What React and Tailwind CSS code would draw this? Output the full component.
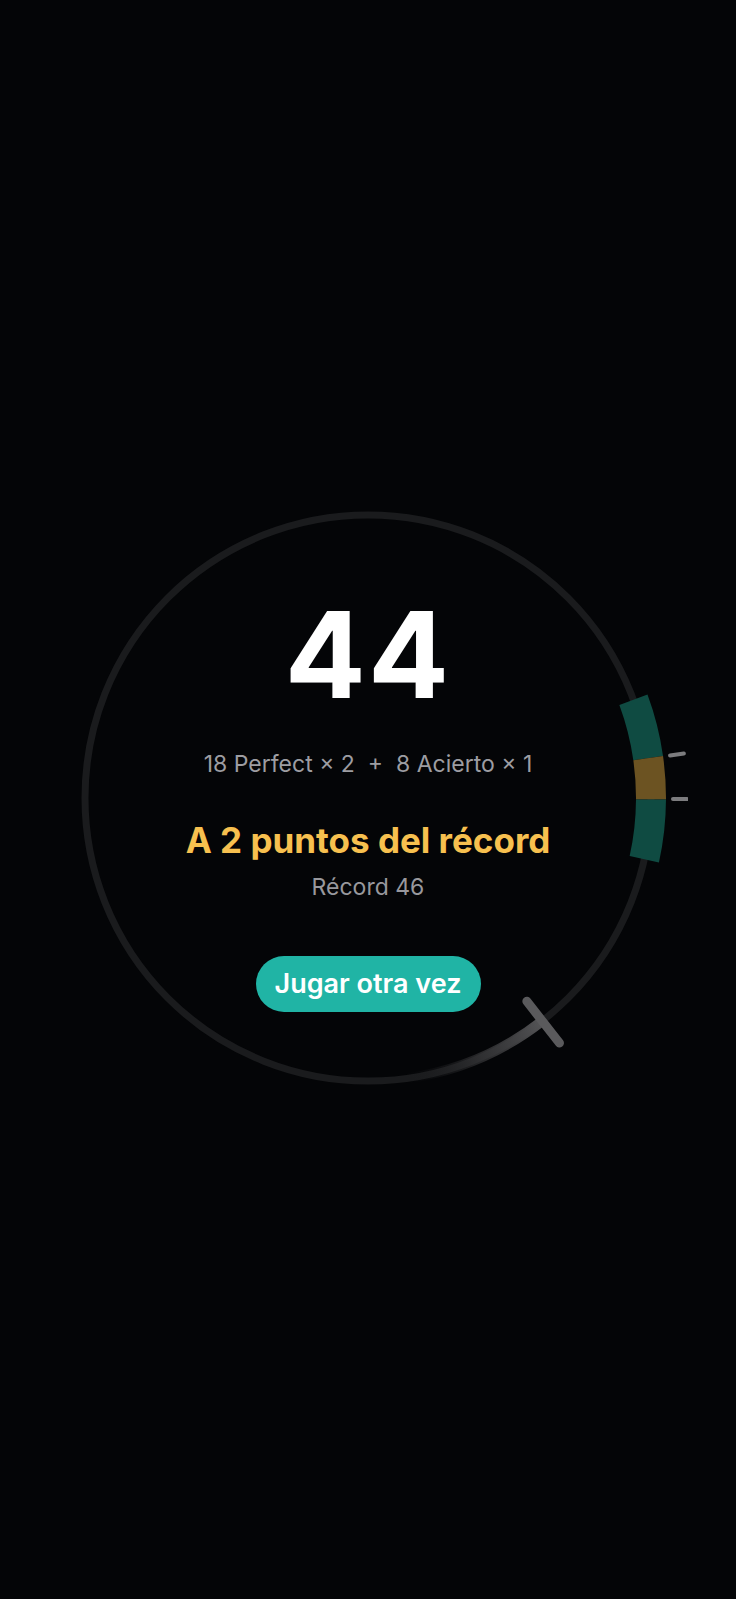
import React from 'react';

const C = 320;

const pt = (r, deg) => {
  const a = (deg * Math.PI) / 180;
  return [C + r * Math.cos(a), C + r * Math.sin(a)];
};

// annular sector between two radii and two angles (degrees, clockwise from 3 o'clock)
const sector = (r1, r2, a1, a2) => {
  const [x1, y1] = pt(r2, a1);
  const [x2, y2] = pt(r2, a2);
  const [x3, y3] = pt(r1, a2);
  const [x4, y4] = pt(r1, a1);
  return `M${x1} ${y1} A${r2} ${r2} 0 0 1 ${x2} ${y2} L${x3} ${y3} A${r1} ${r1} 0 0 0 ${x4} ${y4} Z`;
};

const arc = (r, a1, a2) => {
  const [x1, y1] = pt(r, a1);
  const [x2, y2] = pt(r, a2);
  return `M${x1} ${y1} A${r} ${r} 0 0 1 ${x2} ${y2}`;
};

const Dial = () => {
  const [n1x, n1y] = pt(258, 52);
  const [n2x, n2y] = pt(311, 52);
  const [t1x, t1y] = pt(283, 52);
  const [t2x, t2y] = pt(283, 82);
  return (
    <svg viewBox="0 0 640 640" className="absolute inset-0 w-full h-full">
      <defs>
        <linearGradient id="trail" gradientUnits="userSpaceOnUse" x1={t1x} y1={t1y} x2={t2x} y2={t2y}>
          <stop offset="0" stopColor="#555557" stopOpacity="1" />
          <stop offset="0.5" stopColor="#3c3c3e" stopOpacity="0.6" />
          <stop offset="1" stopColor="#1a1b1d" stopOpacity="0" />
        </linearGradient>
      </defs>

      <circle cx={C} cy={C} r="283" fill="none" stroke="#1a1b1d" strokeWidth="7" />

      {/* target zone */}
      <path d={sector(268, 298, -20.3, -8.1)} fill="#0f4b42" />
      <path d={sector(268, 298, -8.1, 0.3)} fill="#6c5322" />
      <path d={sector(268, 298, 0.3, 12.5)} fill="#0f4b42" />

      {/* ticks */}
      {[-8, 0.2].map((a) => {
        const [ax, ay] = pt(305, a);
        const [bx, by] = pt(319, a);
        return (
          <line key={a} x1={ax} y1={ay} x2={bx} y2={by} stroke="#7c7c7e" strokeWidth="4" strokeLinecap="round" />
        );
      })}

      {/* needle trail */}
      <path d={arc(283, 52, 82)} fill="none" stroke="url(#trail)" strokeWidth="10" />

      {/* needle */}
      <line x1={n1x} y1={n1y} x2={n2x} y2={n2y} stroke="#5a5a5c" strokeWidth="9" strokeLinecap="round" />
    </svg>
  );
};

export default function App() {
  return (
    <div className="w-full min-h-[1599px] bg-[#040507] pt-[478px] font-['Inter','Liberation_Sans',sans-serif]">
      <div className="relative mx-auto w-[640px] h-[640px]">
        <Dial />
        <div className="relative flex flex-col items-center pt-[111px]">
          <div className="text-[120px] leading-[132px] font-bold text-white tracking-[2px]">44</div>
          <div className="mt-[28px] text-[23px] leading-[30px] text-[#9d9da2] whitespace-pre">
            18 Perfect × 2  +  8 Acierto × 1
          </div>
          <div className="mt-[41px] text-[35px] leading-[40px] font-bold text-[#f7c04f]">
            A 2 puntos del récord
          </div>
          <div className="mt-[12px] text-[23px] leading-[30px] text-[#98989d]">Récord 46</div>
          <button className="mt-[54px] w-[225px] h-[56px] rounded-full bg-[#20b4a5] text-white text-[27px] font-semibold">
            Jugar otra vez
          </button>
        </div>
      </div>
    </div>
  );
}
